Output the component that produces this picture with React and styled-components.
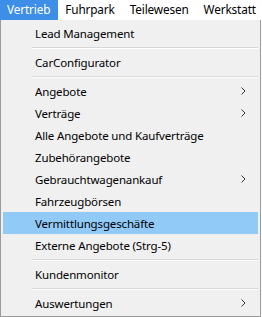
import React from 'react';
import styled, { createGlobalStyle } from 'styled-components';

const Global = createGlobalStyle`
  body {
    margin: 0;
    background: #ffffff;
    font-family: "Segoe UI", "Noto Sans", "Open Sans", sans-serif;
    font-size: 11.5px;
    letter-spacing: -0.15px;
    color: #000;
  }
`;

const Frame = styled.div`
  width: 262px;
  height: 317px;
  display: flex;
  flex-direction: column;
  overflow: hidden;
`;

const MenuBar = styled.div`
  height: 20px;
  display: flex;
  background: #ffffff;
  font-size: 11.8px;
`;

const BarItem = styled.div`
  height: 20px;
  line-height: 19px;
  padding: 0 8px 0 7px;
  background: ${p => (p.$active ? '#3d8ee6' : 'transparent')};
  color: ${p => (p.$active ? '#ffffff' : '#000')};
  white-space: nowrap;
`;

const Panel = styled.div`
  width: 261px;
  flex: 1;
  box-sizing: border-box;
  border: 1px solid #9a9a9a;
  border-top: none;
  background: #f0f0f0;
  padding: 2px;
  display: flex;
  flex-direction: column;
`;

const Item = styled.div`
  height: 22px;
  display: flex;
  align-items: center;
  padding-left: 32px;
  padding-right: 12px;
  background: ${p => (p.$hover ? '#91c9f7' : 'transparent')};
  white-space: nowrap;
`;

const Label = styled.span`
  flex: 1;
`;

const Sep = styled.div`
  height: 7px;
  display: flex;
  align-items: center;
  padding-left: 29px;
  &::after {
    content: '';
    flex: 1;
    height: 1px;
    background: #d7d7d7;
    border-bottom: 1px solid #ffffff;
  }
`;

const Chevron = () => (
  <svg width="5" height="8" viewBox="0 0 5 8">
    <path d="M0.5 0.5 L4 4 L0.5 7.5" fill="none" stroke="#333" strokeWidth="1" />
  </svg>
);

const menu = [
  { t: 'Lead Management' },
  { sep: true },
  { t: 'CarConfigurator' },
  { sep: true },
  { t: 'Angebote', sub: true },
  { t: 'Verträge', sub: true },
  { t: 'Alle Angebote und Kaufverträge' },
  { t: 'Zubehörangebote' },
  { t: 'Gebrauchtwagenankauf', sub: true },
  { t: 'Fahrzeugbörsen' },
  { t: 'Vermittlungsgeschäfte', hover: true },
  { t: 'Externe Angebote (Strg-5)' },
  { sep: true },
  { t: 'Kundenmonitor' },
  { sep: true },
  { t: 'Auswertungen', sub: true },
];

export default function App() {
  return (
    <>
      <Global />
      <Frame>
        <MenuBar>
          <BarItem $active>Vertrieb</BarItem>
          <BarItem>Fuhrpark</BarItem>
          <BarItem>Teilewesen</BarItem>
          <BarItem>Werkstatt</BarItem>
        </MenuBar>
        <Panel>
          {menu.map((m, i) =>
            m.sep ? (
              <Sep key={i} />
            ) : (
              <Item key={i} $hover={m.hover}>
                <Label>{m.t}</Label>
                {m.sub && <Chevron />}
              </Item>
            )
          )}
        </Panel>
      </Frame>
    </>
  );
}
